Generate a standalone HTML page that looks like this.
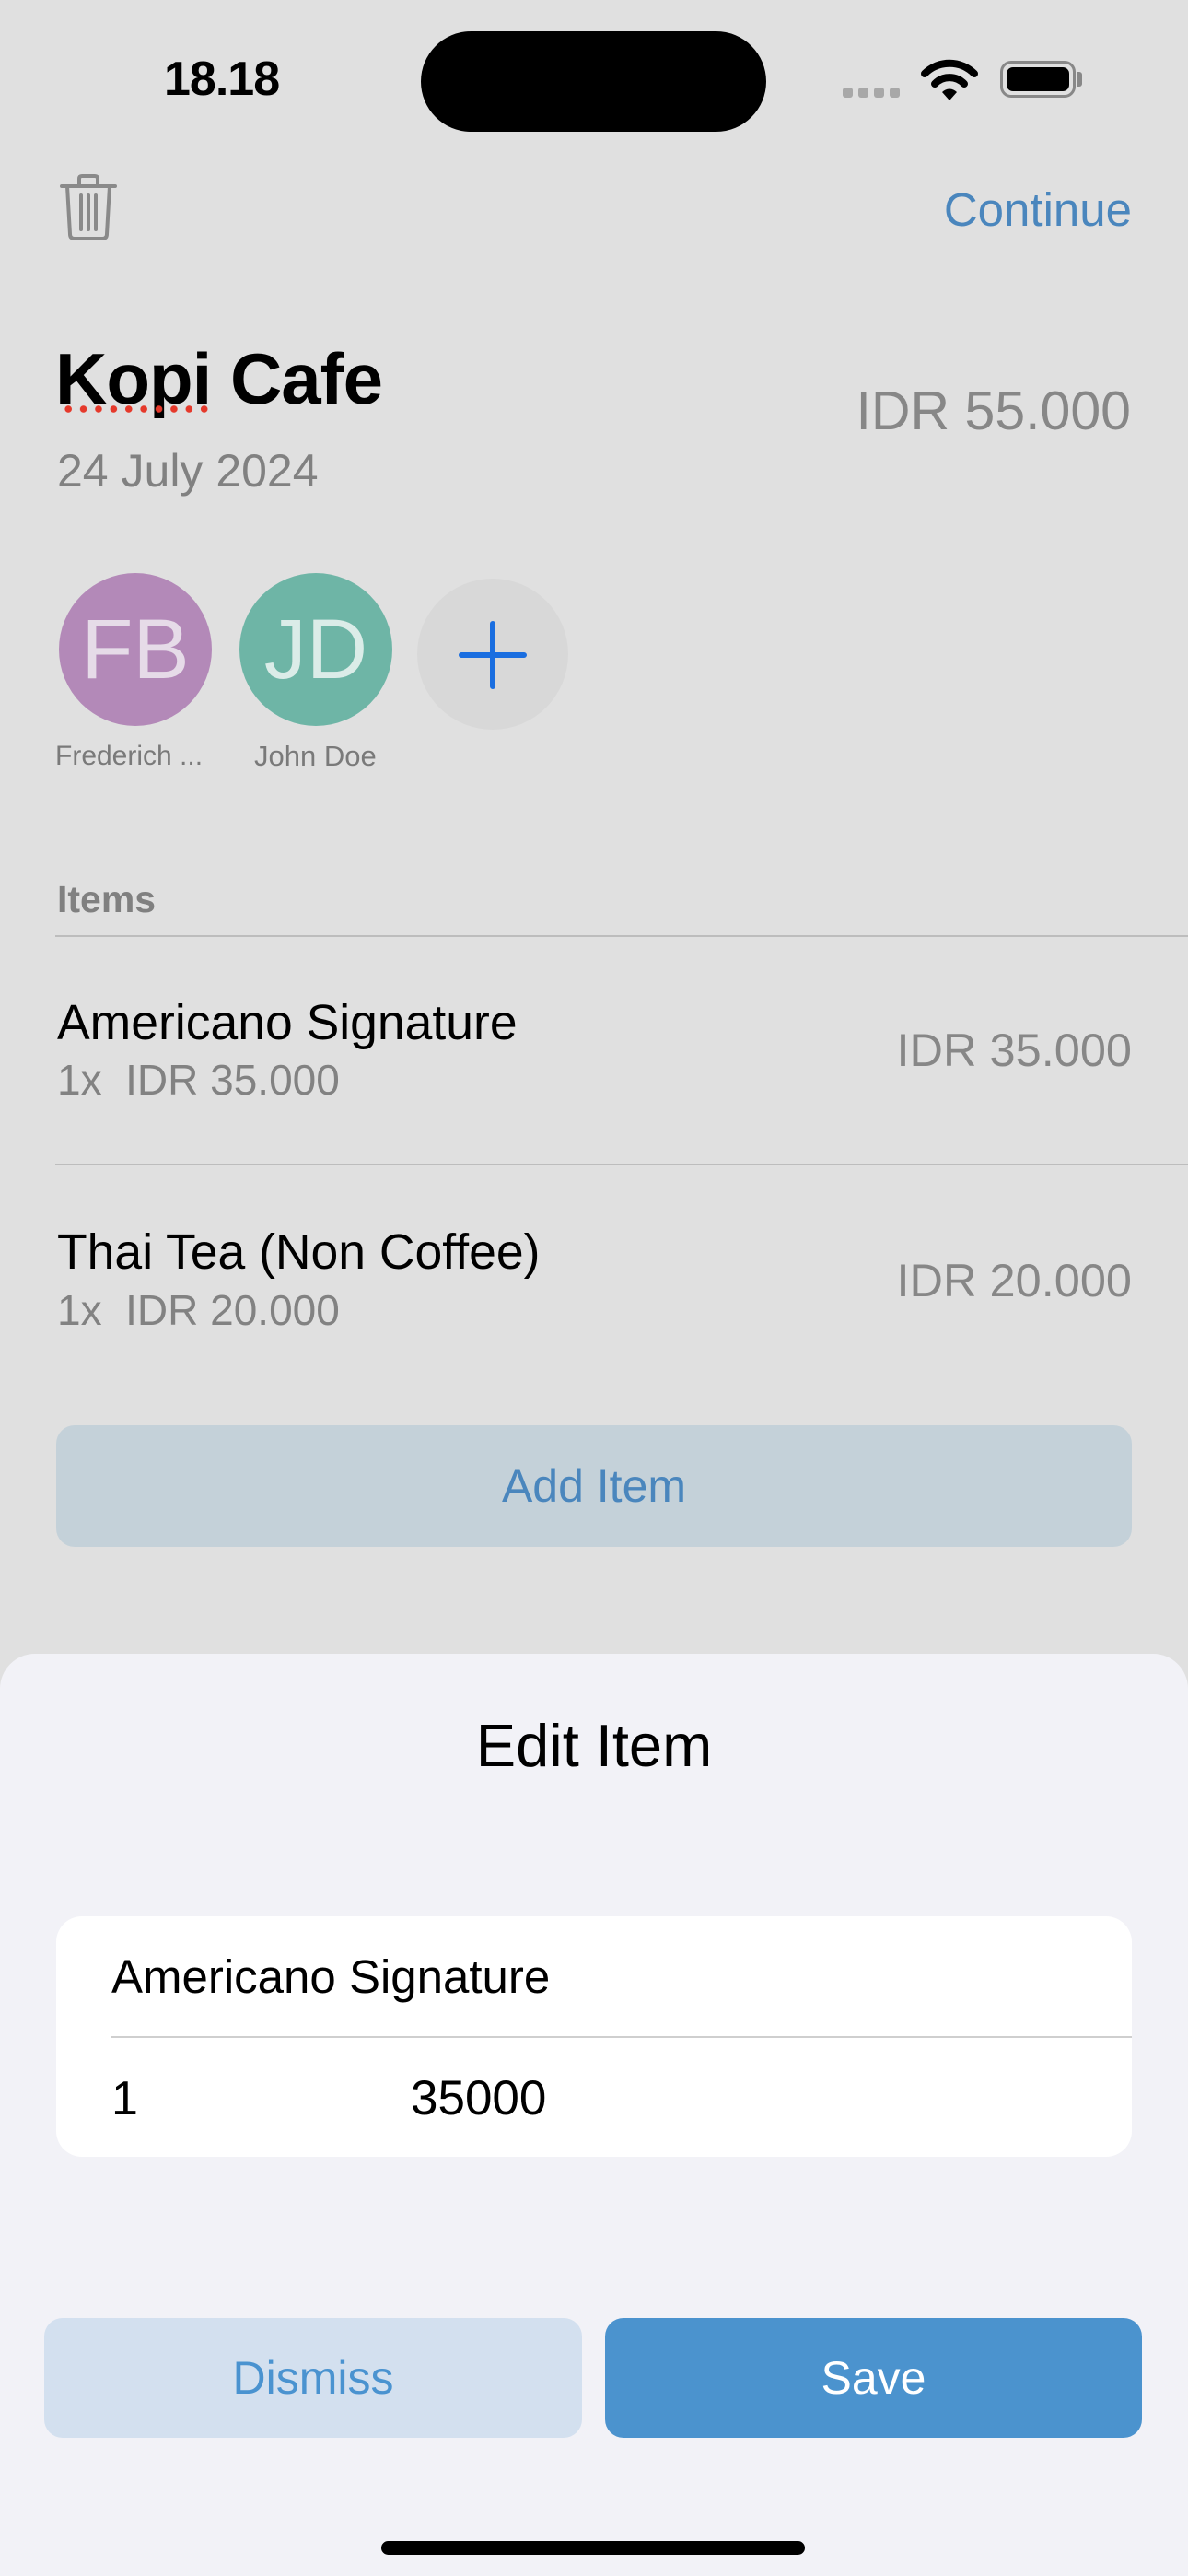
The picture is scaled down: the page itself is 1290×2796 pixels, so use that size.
<!DOCTYPE html>
<html><head><meta charset="utf-8"><style>
*{margin:0;padding:0;box-sizing:border-box}
body{width:1290px;height:2796px;background:#e0e0e0;font-family:"Liberation Sans",sans-serif;position:relative;overflow:hidden}
.a{position:absolute;white-space:nowrap}
</style></head><body>
<div class="a" style="left:178px;top:56px;height:60px;line-height:60px;font-size:52px;font-weight:bold;color:#000;letter-spacing:-1px">18.18</div>
<div class="a" style="left:457px;top:34px;width:375px;height:109px;border-radius:55px;background:#000"></div>
<div class="a" style="left:915px;top:95px;width:66px;height:11px;display:flex;gap:6px">
<span style="width:11px;height:11px;border-radius:3px;background:#a8a8a8"></span><span style="width:11px;height:11px;border-radius:3px;background:#a8a8a8"></span><span style="width:11px;height:11px;border-radius:3px;background:#a8a8a8"></span><span style="width:11px;height:11px;border-radius:3px;background:#a8a8a8"></span></div>
<svg class="a" style="left:1000px;top:64px" width="62" height="46" viewBox="0 0 62 46"><path d="M4 16 A38 38 0 0 1 58 16" stroke="#000" stroke-width="8" fill="none" stroke-linecap="round"/><path d="M15 27 A22 22 0 0 1 47 27" stroke="#000" stroke-width="8" fill="none" stroke-linecap="round"/><path d="M23 36 L31 45 L39 36 A11 11 0 0 0 23 36Z" fill="#000"/></svg>
<div class="a" style="left:1086px;top:66px;width:82px;height:40px;border:3px solid #888;border-radius:12px;padding:4px"><div style="width:100%;height:100%;background:#000;border-radius:7px"></div></div>
<div class="a" style="left:1170px;top:78px;width:5px;height:16px;background:#888;border-radius:0 3px 3px 0"></div>
<svg class="a" style="left:64px;top:188px" width="64" height="74" viewBox="0 0 64 74"><g stroke="#8a8a8a" stroke-width="4" fill="none" stroke-linecap="round" stroke-linejoin="round"><path d="M3 14 H61"/><path d="M22 14 V6 Q22 3 25 3 H39 Q42 3 42 6 V14"/><path d="M9 14 L12 66 Q12 71 17 71 H47 Q52 71 52 66 L55 14"/><path d="M24 24 V61 M32 24 V61 M40 24 V61"/></g></svg>
<div class="a" style="right:61px;top:198px;height:60px;line-height:60px;font-size:51px;color:#4a86bd">Continue</div>
<div class="a" style="left:60px;top:366px;height:90px;line-height:90px;font-size:78px;font-weight:bold;color:#000;letter-spacing:-1px">Kopi Cafe</div>
<div class="a" style="left:66px;top:440px;width:164px;height:8px;background-image:radial-gradient(circle,#e5392b 3.5px,transparent 4px);background-size:16.4px 8px"></div>
<div class="a" style="left:62px;top:481px;height:60px;line-height:60px;font-size:50px;color:#818181">24 July 2024</div>
<div class="a" style="right:62px;top:410px;height:72px;line-height:72px;font-size:59px;color:#878787">IDR 55.000</div>
<div class="a" style="left:64px;top:622px;width:166px;height:166px;border-radius:50%;background:#b389b8;color:#e6dbe8;font-size:92px;line-height:166px;text-align:center">FB</div>
<div class="a" style="left:260px;top:622px;width:166px;height:166px;border-radius:50%;background:#6eb5a6;color:#dbece8;font-size:92px;line-height:166px;text-align:center">JD</div>
<div class="a" style="left:453px;top:628px;width:164px;height:164px;border-radius:50%;background:#d8d8d8"></div>
<svg class="a" style="left:497px;top:673px" width="76" height="76" viewBox="0 0 76 76"><path d="M38 4V72M4 38H72" stroke="#1a6ee0" stroke-width="6" stroke-linecap="round"/></svg>
<div class="a" style="left:60px;top:803px;height:36px;line-height:36px;font-size:30px;color:#7a7a7a">Frederich ...</div>
<div class="a" style="left:276px;top:803px;height:36px;line-height:36px;font-size:31px;color:#7a7a7a">John Doe</div>
<div class="a" style="left:62px;top:952px;height:48px;line-height:48px;font-size:41px;font-weight:bold;color:#808080">Items</div>
<div class="a" style="left:60px;top:1015px;width:1230px;height:2px;background:#bdbdbd"></div>
<div class="a" style="left:62px;top:1080px;height:62px;line-height:62px;font-size:53.5px;color:#000">Americano Signature</div>
<div class="a" style="left:62px;top:1144px;height:56px;line-height:56px;font-size:46px;color:#828282">1x&nbsp; IDR 35.000</div>
<div class="a" style="right:61px;top:1110px;height:60px;line-height:60px;font-size:50.5px;color:#878787">IDR 35.000</div>
<div class="a" style="left:60px;top:1263px;width:1230px;height:2px;background:#bdbdbd"></div>
<div class="a" style="left:62px;top:1329px;height:62px;line-height:62px;font-size:53.5px;color:#000">Thai Tea (Non Coffee)</div>
<div class="a" style="left:62px;top:1394px;height:56px;line-height:56px;font-size:46px;color:#828282">1x&nbsp; IDR 20.000</div>
<div class="a" style="right:61px;top:1360px;height:60px;line-height:60px;font-size:50.5px;color:#878787">IDR 20.000</div>
<div class="a" style="left:61px;top:1547px;width:1168px;height:132px;border-radius:20px;background:#c4d1d9;color:#4a86bd;font-size:50px;line-height:132px;text-align:center">Add Item</div>
<div class="a" style="left:0;top:1795px;width:1290px;height:1001px;border-radius:38px 38px 0 0;background:#f2f2f7"></div>
<div class="a" style="left:0;top:1856px;width:1290px;height:78px;line-height:78px;font-size:65px;color:#000;text-align:center">Edit Item</div>
<div class="a" style="left:61px;top:2080px;width:1168px;height:261px;border-radius:28px;background:#fff"></div>
<div class="a" style="left:121px;top:2115px;height:62px;line-height:62px;font-size:51px;color:#000">Americano Signature</div>
<div class="a" style="left:121px;top:2210px;width:1108px;height:2px;background:#cfcfcf"></div>
<div class="a" style="left:121px;top:2247px;height:62px;line-height:62px;font-size:52px;color:#000">1</div>
<div class="a" style="left:446px;top:2247px;height:62px;line-height:62px;font-size:53px;color:#000">35000</div>
<div class="a" style="left:48px;top:2516px;width:584px;height:130px;border-radius:20px;background:#d3e0ef;color:#4a93d0;font-size:50px;line-height:130px;text-align:center">Dismiss</div>
<div class="a" style="left:657px;top:2516px;width:583px;height:130px;border-radius:20px;background:#4b93ce;color:#fff;font-size:50px;line-height:130px;text-align:center">Save</div>
<div class="a" style="left:414px;top:2758px;width:460px;height:15px;border-radius:8px;background:#000"></div>
</body></html>
